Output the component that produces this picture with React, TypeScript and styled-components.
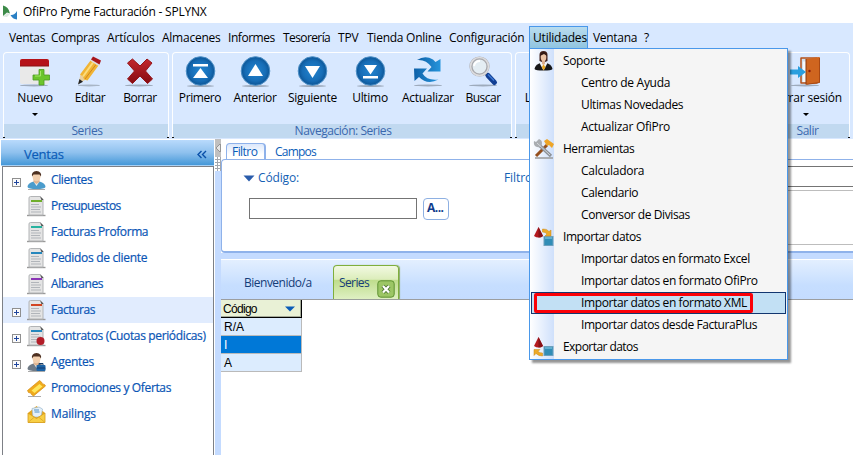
import React from "react";
import styled, { createGlobalStyle } from "styled-components";

const Global = createGlobalStyle`
  * { box-sizing: border-box; }
  body { margin: 0; background: #fff; overflow: hidden; }
`;

const Window = styled.div`
  position: relative;
  width: 853px;
  height: 455px;
  display: flex;
  flex-direction: column;
  overflow: hidden;
  background: #fff;
  color: #000;
  font: 12px/16px "Open Sans", "Noto Sans", sans-serif;
  letter-spacing: -0.15px;
  white-space: nowrap;
`;

const T = styled.span<{ $ls?: number }>`
  letter-spacing: ${(p) => p.$ls ?? -0.15}px;
`;

const TitleBar = styled.header`
  flex: none;
  height: 23px;
  display: flex;
  align-items: center;
  gap: 5px;
  padding: 1px 0 0 2px;
`;

const MenuBar = styled.nav`
  flex: none;
  height: 29px;
  display: flex;
  padding: 3px 0 0 4px;
  background: #d8e8ff;
`;

const MenuItem = styled.div<{ $w: number; $open?: boolean }>`
  flex: none;
  width: ${(p) => p.$w}px;
  height: ${(p) => (p.$open ? 23 : 22)}px;
  padding: 3px 0 0 ${(p) => (p.$open ? 3 : 5)}px;
  border: 1px solid ${(p) => (p.$open ? "#4a98ea" : "transparent")};
  border-width: 1px ${(p) => (p.$open ? 1 : 0)}px 0 ${(p) => (p.$open ? 1 : 0)}px;
  background: ${(p) => (p.$open ? "linear-gradient(#b9dcee, #8fc4e0)" : "none")};
`;

const Ribbon = styled.div`
  flex: none;
  height: 87px;
  display: flex;
  gap: 3px;
  padding: 0 3px 1px;
  background: #d8e8ff;
`;

const Group = styled.section<{ $w: number }>`
  position: relative;
  flex: none;
  width: ${(p) => p.$w}px;
  display: flex;
  flex-direction: column;
  border: 1px solid #fdfeff;
  border-bottom: 0;
  border-radius: 4px 4px 2px 2px;
  &::before, &::after {
    content: "";
    position: absolute;
    bottom: 0;
    width: 2px;
    height: 1px;
    background: #111;
  }
  &::before { left: -1px; }
  &::after { right: -1px; }
`;

const Tools = styled.div`
  flex: 1;
  display: flex;
`;

const Tool = styled.div<{ $w: number }>`
  flex: none;
  width: ${(p) => p.$w}px;
  display: flex;
  flex-direction: column;
  align-items: center;
  padding-top: 3px;
  svg { flex: none; display: block; }
`;

const ToolLabel = styled.span<{ $ls?: number }>`
  margin-top: 2px;
  letter-spacing: ${(p) => p.$ls ?? -0.2}px;
`;

const Caret = styled.i`
  margin-top: 7px;
  border: 3px solid transparent;
  border-top-color: #000;
  border-bottom: 0;
`;

const GroupLabel = styled.div<{ $shift?: number }>`
  flex: none;
  height: 14px;
  padding-left: ${(p) => p.$shift ?? 2}px;
  background: #c1d9f0;
  color: #3a68ae;
  line-height: 14px;
  text-align: center;
  letter-spacing: -0.45px;
`;

const Body = styled.div`
  flex: 1;
  min-height: 0;
  display: flex;
`;

const Side = styled.aside`
  flex: none;
  width: 213px;
  margin: 1px 1px 0 1px;
  display: flex;
  flex-direction: column;
`;

const SideHeader = styled.div`
  flex: none;
  height: 26px;
  display: flex;
  align-items: center;
  justify-content: space-between;
  padding: 3px 7px 0 23px;
  background: linear-gradient(#b9dafc, #8fc1ee 50%, #4598d8);
  border-bottom: 1px solid #a8d0f4;
  color: #0b5cb8;
  font-size: 13px;
  -webkit-text-stroke: 0.2px;
`;

const Tree = styled.div`
  flex: 1;
  margin-left: 1px;
  border: 1px solid #7d8086;
  border-bottom: 0;
`;

const TreeRow = styled.div<{ $on?: boolean }>`
  height: 26px;
  display: flex;
  align-items: center;
  padding-left: 9px;
  background: ${(p) => (p.$on ? "#e1ecfe" : "#fff")};
  color: #0a55b5;
  -webkit-text-stroke: 0.2px;
  svg { flex: none; display: block; }
`;

const PlusSlot = styled.span`
  width: 15px;
  height: 9px;
  margin-top: 5px;
`;

const TreeText = styled(T)`
  margin-left: 5px;
`;

const Splitter = styled.div`
  flex: none;
  width: 6px;
  background: #c4dbff;
`;

const Main = styled.main`
  flex: 1;
  min-width: 0;
  display: flex;
  flex-direction: column;
`;

const FilterTabs = styled.div`
  flex: none;
  height: 20px;
  display: flex;
  padding: 4px 0 0 5px;
  color: #0a5cb8;
`;

const FilterTab = styled.div<{ $on?: boolean }>`
  width: ${(p) => (p.$on ? 40 : 60)}px;
  height: 16px;
  padding-left: ${(p) => (p.$on ? 5 : 9)}px;
  line-height: ${(p) => (p.$on ? 16 : 18)}px;
  ${(p) =>
    p.$on &&
    `border: 1px solid #8fb2ea; border-right-width: 2px; border-bottom: 0;
     border-radius: 4px 4px 0 0; background: linear-gradient(#dce8fb, #fff 70%);`}
`;

const FilterPanel = styled.div`
  flex: none;
  height: 94px;
  display: flex;
  padding: 6px 0 0 21px;
  border: 1px solid #8fb2ea;
  border-width: 1px 0 2px 1px;
  border-radius: 4px 0 0 4px;
  color: #1461b4;
`;

const Field = styled.div`
  width: 261px;
`;

const FieldHead = styled.div`
  display: flex;
  align-items: center;
  gap: 3px;
  margin-top: 4px;
`;

const FieldRow = styled.div`
  display: flex;
  gap: 6px;
  margin: 12px 0 0 6px;
`;

const TextBox = styled.div`
  width: 168px;
  height: 21px;
  border: 1px solid #747474;
  background: #fff;
`;

const PickButton = styled.div`
  width: 26px;
  height: 22px;
  padding-left: 3px;
  border: 1px solid #8eb0e2;
  border-radius: 4px;
  color: #103c8c;
  font-weight: 700;
  line-height: 18px;
  letter-spacing: -0.5px;
`;

const ListColumn = styled.div`
  flex: 1;
  display: flex;
  flex-direction: column;
  gap: 3px;
`;

const ListBox = styled.div<{ $h: number; $c: string }>`
  height: ${(p) => p.$h}px;
  border: 1px solid ${(p) => p.$c};
  border-right: 0;
`;

const Gap = styled.div`
  flex: none;
  height: 6px;
  background: #c4dbff;
`;

const DocTabs = styled.div`
  flex: none;
  height: 41px;
  display: flex;
  border-top: 1px solid #fff;
  border-bottom: 1px solid #9c9ea0;
  background: linear-gradient(#e3efff, #c6deff 65%, #c4dcff);
  color: #153c78;
`;

const DocTab = styled.div`
  width: 112px;
  padding: 15px 0 0 23px;
`;

const ActiveTab = styled.div`
  width: 66px;
  height: 34px;
  margin-top: 5px;
  display: flex;
  justify-content: space-between;
  padding: 9px 3px 0 5px;
  border: 1px solid #7fae3c;
  border-bottom: 0;
  border-radius: 4px 4px 0 0;
  background: linear-gradient(#f2f9e2, #dcedbb 40%, #bfdd8d 44%, #dff0c3);
  box-shadow: 1px 0 1px #8ba96a;
  svg { margin-top: 5px; }
`;

const Grid = styled.div`
  width: 81px;
  font-family: "Liberation Sans", sans-serif;
  letter-spacing: 0;
`;

const GridHead = styled.div`
  height: 18px;
  display: flex;
  align-items: center;
  justify-content: space-between;
  padding: 0 6px 0 2px;
  border-right: 1px solid #000;
  border-bottom: 1px solid #000;
  background: #e9f1d6;
  box-shadow: inset -1px -1px #a4aa98;
`;

const GridRow = styled.div<{ $on?: boolean }>`
  height: 18px;
  padding-left: 3px;
  border-right: 1px solid #bababa;
  border-bottom: 1px solid #bababa;
  background: ${(p) => (p.$on ? "#0078d7" : "#dcecfe")};
  color: ${(p) => (p.$on ? "#fff" : "#000")};
  line-height: 18px;
`;

const Dropdown = styled.div`
  position: absolute;
  left: 529px;
  top: 48px;
  width: 259px;
  height: 312px;
  padding: 1px;
  border: 1px solid #4a98ea;
  background: linear-gradient(90deg, #fff, #cfe0fb 24px, #f5f5f5 24px);
  box-shadow: 3px 3px 2px rgba(0, 0, 0, 0.42);
`;

const DropRow = styled.div<{ $on?: boolean }>`
  position: relative;
  height: 22px;
  display: flex;
  align-items: center;
  border: 1px solid ${(p) => (p.$on ? "#12366f" : "transparent")};
  background: ${(p) => (p.$on ? "#c2e0f4" : "none")};
`;

const DropIcon = styled.span`
  width: 31px;
  height: 20px;
  flex: none;
  svg { display: block; }
`;

const DropText = styled(T)<{ $sub?: boolean }>`
  margin-left: ${(p) => (p.$sub ? 18 : 0)}px;
`;

const RedFrame = styled.span`
  position: absolute;
  left: 2px;
  top: 0;
  width: 219px;
  height: 20px;
  border: 3px solid #fb0007;
  border-radius: 2px;
`;

const Shadow = () => <ellipse cx="15" cy="29.4" rx="14" ry="1" fill="#7f8a98" opacity=".65" />;

const NuevoIcon = () => (
  <svg width="32" height="32" viewBox="0 0 32 32">
    <Shadow />
    <rect x="1" y="3" width="29" height="25" rx="2" fill="#e9e9e9" />
    <path d="M1 10V5q0-2 2-2h25q2 0 2 2v5z" fill="#b51218" />
    <path d="M1 10h29" stroke="#8a1012" />
    <path d="M20 13.500h5v5.500h5.500v5H25V29h-5v-5h-6v-5h6z" fill="#6cc52c" stroke="#4d9b22" strokeWidth=".8" />
    <path d="M21.500 15v5h-5.500" fill="none" stroke="#a4e566" />
  </svg>
);
const EditarIcon = () => (
  <svg width="32" height="32" viewBox="0 0 32 32">
    <ellipse cx="15" cy="29.400" rx="11" ry="1" fill="#8a94a0" opacity=".6" />
    <path d="M4.500 27.500 6.500 18 13 23z" fill="#e8cfa0" />
    <path d="M4 28.500 5.500 23 9 25.800z" fill="#222" />
    <path d="M6 18.500 16.500 4.500 24.500 9.500 13.500 24.500 10 23.500 9 20.500z" fill="#f1b434" />
    <path d="M9 20.500 19 6.500" stroke="#fbdc7e" strokeWidth="2" />
    <path d="M11 23 22 8.500" stroke="#cf851e" />
    <path d="M16 4.500 18 2.500 26 7.500 24.500 10z" fill="#ddd" />
    <path d="M17 3.500 19 0.500 27 4.500 25.500 8.500z" fill="#a8161c" />
  </svg>
);
const BorrarIcon = () => (
  <svg width="32" height="32" viewBox="0 0 32 32">
    <Shadow />
    <defs><linearGradient id="rx" x2="0" y2="1"><stop stopColor="#c3272c" /><stop offset="1" stopColor="#850c12" /></linearGradient></defs>
    <path d="M3.500 7 8.500 3 16 10 23 3 28 7 21.500 15 28.500 23 23.500 27.500 16 20 8.500 27.500 3.500 23 10.500 15z" fill="url(#rx)" stroke="#961318" strokeLinejoin="round" />
  </svg>
);
const RoundIcon = ({ glyph }: { glyph: string }) => (
  <svg width="31" height="32" viewBox="0 0 31 32">
    <ellipse cx="15.500" cy="30" rx="13.500" ry="1" fill="#7f8a98" opacity=".65" />
    <defs><radialGradient id="rb"><stop stopColor="#2285d0" /><stop offset=".7" stopColor="#176db6" /><stop offset="1" stopColor="#0c5596" /></radialGradient></defs>
    <circle cx="15.500" cy="15" r="14.300" fill="url(#rb)" stroke="#4c8fc6" />
    <path d={glyph} fill="#fff" />
  </svg>
);
const ActualizarIcon = () => (
  <svg width="30" height="32" viewBox="0 0 30 32">
    <Shadow />
    <defs><linearGradient id="rf" x2="1"><stop stopColor="#0e60a8" /><stop offset="1" stopColor="#2695dc" /></linearGradient></defs>
    <path d="M4 4Q12-1 20 3.500L22.500 6 27.500 3V15.500H14.500L18.500 11Q13 3 4 4z" fill="url(#rf)" />
    <path d="M1 12.500H14L9.500 17.500Q14 25 25.500 23.500 14.500 29.500 6 21L1.500 25z" fill="url(#rf)" />
  </svg>
);
const BuscarIcon = () => (
  <svg width="31" height="32" viewBox="0 0 31 32">
    <Shadow />
    <path d="m17 17 4 4" stroke="#999" strokeWidth="3" />
    <path d="m20 19.500 6.500 7" stroke="#123f93" strokeWidth="5" strokeLinecap="round" />
    <path d="m20 18.500 6 6" stroke="#3c78d4" strokeWidth="1.500" />
    <circle cx="11.500" cy="10.500" r="8.500" fill="#e4edf3" stroke="#a9a9ad" strokeWidth="3.200" />
    <circle cx="11.500" cy="10.500" r="9" fill="none" stroke="#dcdcde" strokeWidth="1.600" />
    <path d="M6 10q1-5 6-5" stroke="#fff" strokeWidth="2" fill="none" />
  </svg>
);
const SalirIcon = () => (
  <svg width="32" height="32" viewBox="0 0 32 32">
    <Shadow />
    <path d="M11 2h16v25H11z" fill="#d4e2ee" stroke="#b4501a" strokeWidth="1.500" strokeLinejoin="round" />
    <path d="M13 5.500h3V26h-3z" fill="#f6fafc" />
    <path d="M16 3 29 1q1 0 1 1v24.500l-14 2z" fill="#cf651f" />
    <path d="M16 3v25.500" stroke="#8a380e" />
    <path d="M29.500 2v24.500l-13 1.800" fill="none" stroke="#a84813" />
    <circle cx="19.500" cy="15" r="1.200" fill="#8c1d0c" />
    <path d="M0 13.500h8V10l8 6-8 6v-3.500H0z" fill="#2b9fdf" />
  </svg>
);

const DocIcon = ({ c, seal }: { c: string; seal?: boolean }) => (
  <svg width="19" height="21" viewBox="0 0 19 21">
    <path d="M0 19.500h18.500" stroke="#9a9a9a" strokeWidth="1.400" />
    <path d="M2 2q0-1.500 1.500-1.500h10L16 3v16H2z" fill="#e4e4e4" stroke="#b2b4b6" />
    <path d="m13 .5 3.500 3.500h-2z" fill="#444" />
    <path d="M4 5h11" stroke={c} strokeWidth="2" />
    <path d="M4 8.500h8M4 11h10M4 13.500h9M4 16h10" stroke="#b1b5ba" />
    {seal && <circle cx="13.500" cy="15" r="4" fill="#b31d28" />}
  </svg>
);
const PersonIcon = ({ agent }: { agent?: boolean }) => (
  <svg width="19" height="21" viewBox="0 0 19 21">
    <path d="M1 19.500h17" stroke="#aaa" />
    <path d="M.5 17q0-4 6-5.500h6q6 1.500 6 5.500-1 2-9 2t-9-2z" fill={agent ? "#6f7a86" : "#4b9ccc"} />
    <path d="M6.500 11.500 9.500 16l3-4.500z" fill="#e8edf0" />
    <path d="M6.500 8h6v4l-3 2-3-2z" fill="#e0b490" />
    <ellipse cx="9.500" cy="6.500" rx="4" ry="4.800" fill="#f2cfae" />
    <path d="M5 6.500Q4 1.500 9.500 1q5.500.5 4.500 5.500L12.500 4.500h-6z" fill="#4d3020" />
    {agent && <><path d="M12 13v-1.500h4V13" fill="none" stroke="#173e68" /><rect x="9.500" y="13" width="9" height="6" rx="1" fill="#1c63a6" /><path d="M10 16h8" stroke="#123d70" /></>}
  </svg>
);
const TicketIcon = () => (
  <svg width="19" height="21" viewBox="0 0 19 21">
    <path d="M1 18.500h13" stroke="#aaa" />
    <path d="M.5 12.500 12.500 2.500l2 1.500q0 2 3 2.500l1 1.500L6.500 18l-2-1.500q0-2-3-2z" fill="#f0ab1c" stroke="#d48a10" strokeWidth=".7" />
    <path d="m4.500 12.500 8-6.500 3 2.500-8 6.500z" fill="#ffe75c" />
  </svg>
);
const MailIcon = () => (
  <svg width="19" height="21" viewBox="0 0 19 21">
    <path d="M1 9 9.500 2 18 9v9.500H1z" fill="#e6a51d" />
    <path d="M5 4.500 12 3l3.500 2L14 13H6z" fill="#e5f0f8" stroke="#9cb9d0" strokeWidth=".7" />
    <path d="M7 6h5M7.500 8h5" stroke="#4c8fc8" />
    <path d="m1 9 8.500 5.500L18 9v9.500H1z" fill="#f8cf45" stroke="#d59a19" strokeWidth=".8" />
    <path d="m1.500 18 6-5M17.500 18l-6-5" stroke="#dba526" strokeWidth=".8" />
  </svg>
);
const Plus = () => (
  <svg width="9" height="9" viewBox="0 0 9 9" shapeRendering="crispEdges">
    <rect x=".5" y=".5" width="8" height="8" fill="#fafafa" stroke="#8f8f8f" />
    <path d="M2 4.500h5M4.500 2v5" stroke="#1f459d" />
  </svg>
);
const SupportIcon = () => (
  <svg width="23" height="20" viewBox="0 0 23 20">
    <path d="M2.500 18Q3 14 8 12h7q5 2 5.500 6-1 1.500-9 1.500T2.500 18z" fill="#171719" />
    <path d="m7.500 12 4 7.500 4-7.500z" fill="#f4f4f4" />
    <path d="m11.500 13-1.500 3 1.500 3.500 2-3z" fill="#e9a41c" />
    <path d="M7.500 10V4q0-4 4-4t4 4v6l-2.500 1h-3z" fill="#40201a" />
    <path d="M10 9h3v4l-1.500 1L10 13z" fill="#dcae8c" />
    <ellipse cx="11.500" cy="6" rx="2.800" ry="4.300" fill="#eac3a6" />
    <path d="M8 5q1-4 3.500-4T15 5l-3-2z" fill="#301814" />
  </svg>
);
const ToolsIcon = () => (
  <svg width="23" height="20" viewBox="0 0 23 20">
    <path d="M3 19h18" stroke="#9a9a9a" strokeWidth="1.500" />
    <path d="m4 17 11-11" stroke="#95501e" strokeWidth="3" />
    <path d="m12 2 3-2 7 5-2 4-3-3-2 1z" fill="#eea526" />
    <path d="m6 5 13 12" stroke="#8d9298" strokeWidth="3.200" />
    <path d="M7 0 4 3l-2-1q-1 5 3 6 5 1 5-4 0-3-3-4z" fill="#a9adb1" />
    <path d="m5 4 13 12" stroke="#d4d8dc" />
  </svg>
);
const TransferIcon = ({ out }: { out?: boolean }) => (
  <svg width="23" height="20" viewBox="0 0 23 20">
    <path d="M6.500 0 11 9Q6.500 12 2 9z" fill="#b3181e" />
    <path d="M6.500 0v10.500q3 0 4.500-1.500z" fill="#861116" />
    <rect x="12" y="9.500" width="9" height="9" fill="#318db6" stroke="#6da0bc" />
    <path d="M13 11h7" stroke="#60afd0" strokeWidth="2" />
    {out ? (
      <path d="M2 18.500V12.500h6L6 14.500q2 1.500 4.500 1.500v3q-4 0-6.500-2.500z" fill="#edaa28" stroke="#c98715" strokeWidth=".5" />
    ) : (
      <path d="M10.500 2q4.500-.5 6.500 2.500l2-1.500v6h-6l2-2q-1.500-2-4.500-2z" fill="#edaa28" stroke="#c98715" strokeWidth=".5" />
    )}
  </svg>
);
const CloseIcon = () => (
  <svg width="18" height="18" viewBox="0 0 18 18">
    <rect x=".8" y=".8" width="16.400" height="16.400" rx="3" fill="#9cc665" stroke="#5f9232" />
    <path d="m6 6 6 6.500M12 6l-6 6.500" stroke="#4b7230" strokeWidth="4" />
    <path d="m6 6 6 6.500M12 6l-6 6.500" stroke="#fff" strokeWidth="2.200" />
  </svg>
);

const menus: { text: string; w: number; ls?: number }[] = [
  { text: "Ventas", w: 42, ls: -0.3 },
  { text: "Compras", w: 56, ls: -0.3 },
  { text: "Artículos", w: 55 },
  { text: "Almacenes", w: 66, ls: -0.25 },
  { text: "Informes", w: 55, ls: -0.45 },
  { text: "Tesorería", w: 55, ls: -0.6 },
  { text: "TPV", w: 29 },
  { text: "Tienda Online", w: 82, ls: -0.25 },
  { text: "Configuración", w: 85, ls: -0.2 },
];

const tree: { text: string; ls: number; icon: React.ReactNode; plus?: boolean; on?: boolean }[] = [
  { text: "Clientes", ls: -0.4, icon: <PersonIcon />, plus: true },
  { text: "Presupuestos", ls: -0.55, icon: <DocIcon c="#6fae2b" /> },
  { text: "Facturas Proforma", ls: -0.4, icon: <DocIcon c="#29b3a0" /> },
  { text: "Pedidos de cliente", ls: -0.32, icon: <DocIcon c="#2587bd" /> },
  { text: "Albaranes", ls: -0.45, icon: <DocIcon c="#8a35b5" /> },
  { text: "Facturas", ls: -0.45, icon: <DocIcon c="#d24420" />, plus: true, on: true },
  { text: "Contratos (Cuotas periódicas)", ls: -0.36, icon: <DocIcon c="#2587bd" seal />, plus: true },
  { text: "Agentes", ls: -0.3, icon: <PersonIcon agent />, plus: true },
  { text: "Promociones y Ofertas", ls: -0.35, icon: <TicketIcon /> },
  { text: "Mailings", ls: -0.15, icon: <MailIcon /> },
];

const drop: { text: string; ls: number; icon?: React.ReactNode; on?: boolean }[] = [
  { text: "Soporte", ls: -0.35, icon: <SupportIcon /> },
  { text: "Centro de Ayuda", ls: -0.28 },
  { text: "Ultimas Novedades", ls: -0.37 },
  { text: "Actualizar OfiPro", ls: -0.28 },
  { text: "Herramientas", ls: -0.48, icon: <ToolsIcon /> },
  { text: "Calculadora", ls: -0.27 },
  { text: "Calendario", ls: -0.33 },
  { text: "Conversor de Divisas", ls: -0.4 },
  { text: "Importar datos", ls: -0.43, icon: <TransferIcon /> },
  { text: "Importar datos en formato Excel", ls: -0.41 },
  { text: "Importar datos en formato OfiPro", ls: -0.38 },
  { text: "Importar datos en formato XML", ls: -0.38, on: true },
  { text: "Importar datos desde FacturaPlus", ls: -0.42 },
  { text: "Exportar datos", ls: -0.55, icon: <TransferIcon out /> },
];

export default function App() {
  return (
    <>
      <Global />
      <Window>
        <TitleBar>
          <svg width="16" height="16" viewBox="0 0 16 16">
            <path d="M1 1.500Q6.500 2.500 8 9.500L5 8.500 1 12z" fill="#3c8a48" />
            <path d="M1 12.500 5 9l3 1-3 3z" fill="#dfe9e2" />
            <path d="M15 7v8.500Q10.500 15 8.500 11q4 .5 6.500-4z" fill="#2b80c4" />
          </svg>
          <T $ls={-0.24}>OfiPro Pyme Facturación - SPLYNX</T>
        </TitleBar>
        <MenuBar>
          {menus.map((m) => (
            <MenuItem key={m.text} $w={m.w}><T $ls={m.ls}>{m.text}</T></MenuItem>
          ))}
          <MenuItem $w={59} $open><T $ls={-0.2}>Utilidades</T></MenuItem>
          <MenuItem $w={51}><T $ls={-0.3}>Ventana</T></MenuItem>
          <MenuItem $w={20}>?</MenuItem>
        </MenuBar>
        <Ribbon>
          <Group $w={166}>
            <Tools>
              <Tool $w={62}><NuevoIcon /><ToolLabel>Nuevo</ToolLabel><Caret /></Tool>
              <Tool $w={48}><EditarIcon /><ToolLabel $ls={-0.4}>Editar</ToolLabel></Tool>
              <Tool $w={52}><BorrarIcon /><ToolLabel $ls={-0.5}>Borrar</ToolLabel></Tool>
            </Tools>
            <GroupLabel>Series</GroupLabel>
          </Group>
          <Group $w={340}>
            <Tools>
              <Tool $w={54}><RoundIcon glyph="M8 8h15v2.500H8zM15.500 12 23 22H8z" /><ToolLabel $ls={-0.4}>Primero</ToolLabel></Tool>
              <Tool $w={56}><RoundIcon glyph="M15.500 8 23 20H8z" /><ToolLabel $ls={-0.4}>Anterior</ToolLabel></Tool>
              <Tool $w={59}><RoundIcon glyph="M15.500 22 23 10H8z" /><ToolLabel $ls={-0.3}>Siguiente</ToolLabel></Tool>
              <Tool $w={56}><RoundIcon glyph="M8 20h15v2.500H8zM15.500 18.500 22 9H9z" /><ToolLabel $ls={-0.3}>Ultimo</ToolLabel></Tool>
              <Tool $w={60}><ActualizarIcon /><ToolLabel $ls={-0.3}>Actualizar</ToolLabel></Tool>
              <Tool $w={50}><BuscarIcon /><ToolLabel $ls={-0.5}>Buscar</ToolLabel></Tool>
            </Tools>
            <GroupLabel>Navegación: Series</GroupLabel>
          </Group>
          <Group $w={247}>
            <Tools><Tool $w={62}><svg width="31" height="32" /><ToolLabel>Listados</ToolLabel></Tool></Tools>
            <GroupLabel />
          </Group>
          <Group $w={85}>
            <Tools><Tool $w={80}><SalirIcon /><ToolLabel $ls={-0.2}>Cerrar sesión</ToolLabel><Caret /></Tool></Tools>
            <GroupLabel $shift={0}>Salir</GroupLabel>
          </Group>
        </Ribbon>
        <Body>
          <Side>
            <SideHeader>
              <T $ls={-0.25}>Ventas</T>
              <svg width="10" height="9" viewBox="0 0 10 9"><path d="M4.500 1 1 4.500 4.500 8M9 1 5.500 4.500 9 8" fill="none" stroke="#0a50a8" strokeWidth="1.400" /></svg>
            </SideHeader>
            <Tree>
              {tree.map((r) => (
                <TreeRow key={r.text} $on={r.on}>
                  <PlusSlot>{r.plus && <Plus />}</PlusSlot>
                  {r.icon}
                  <TreeText $ls={r.ls}>{r.text}</TreeText>
                </TreeRow>
              ))}
            </Tree>
          </Side>
          <Splitter>
            <svg width="6" height="34" viewBox="0 0 6 34" shapeRendering="crispEdges">
              <path d="M0 0h6v18H0z" fill="#c0c0c0" />
              <path d="M5 5v8L1 9z" fill="#e5e5e5" stroke="#888" strokeWidth=".8" />
              <path d="M0 18h6v14H0z" fill="#a3a7ad" />
              <path d="M1 18v14M4 18v14" stroke="#fff" strokeWidth="2" strokeDasharray="2 1" />
            </svg>
          </Splitter>
          <Main>
            <FilterTabs>
              <FilterTab $on><T $ls={-0.55}>Filtro</T></FilterTab>
              <FilterTab><T $ls={-0.8}>Campos</T></FilterTab>
            </FilterTabs>
            <FilterPanel>
              <Field>
                <FieldHead>
                  <svg width="12" height="7" viewBox="0 0 12 7"><path d="M.5.500h11L6 6.500z" fill="#2a5cab" /></svg>
                  <T $ls={-0.15}>Código:</T>
                </FieldHead>
                <FieldRow><TextBox /><PickButton>A...</PickButton></FieldRow>
              </Field>
              <Field><FieldHead><T $ls={-0.1}>Filtros</T></FieldHead></Field>
              <ListColumn><ListBox $h={21} $c="#747474" /><ListBox $h={55} $c="#bdbdbd" /></ListColumn>
            </FilterPanel>
            <Gap />
            <DocTabs>
              <DocTab><T $ls={-0.5}>Bienvenido/a</T></DocTab>
              <ActiveTab><T $ls={-0.6}>Series</T><CloseIcon /></ActiveTab>
            </DocTabs>
            <Grid>
              <GridHead><T $ls={-0.7}>Código</T><svg width="10" height="6" viewBox="0 0 10 6"><path d="M0 .5h10L5 5.500z" fill="#0b5cb8" /></svg></GridHead>
              <GridRow>R/A</GridRow>
              <GridRow $on>I</GridRow>
              <GridRow>A</GridRow>
            </Grid>
          </Main>
        </Body>
        <Dropdown>
          {drop.map((r) => (
            <DropRow key={r.text} $on={r.on}>
              {r.on && <RedFrame />}
              <DropIcon>{r.icon}</DropIcon>
              <DropText $ls={r.ls} $sub={!r.icon}>{r.text}</DropText>
            </DropRow>
          ))}
        </Dropdown>
      </Window>
    </>
  );
}
